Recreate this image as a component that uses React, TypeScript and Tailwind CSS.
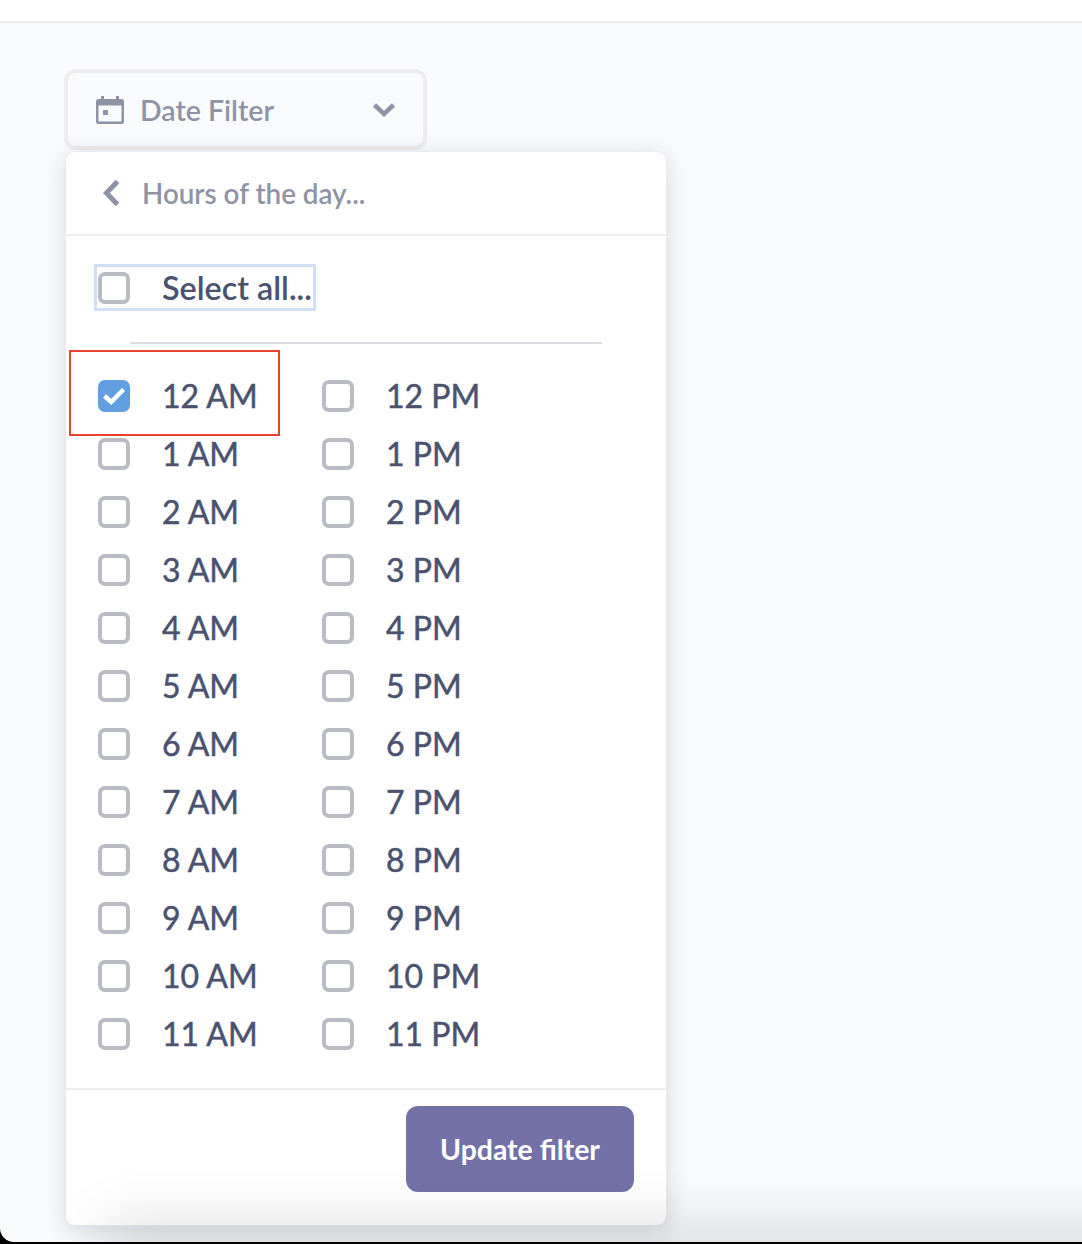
import React from "react";

const hours = ["12", "1", "2", "3", "4", "5", "6", "7", "8", "9", "10", "11"];

function Box({ checked = false }: { checked?: boolean }) {
  if (checked) {
    return (
      <span className="w-[32px] h-[32px] shrink-0 rounded-[7px] bg-[#629fe0] flex items-center justify-center">
        <svg width="24" height="20" viewBox="0 0 24 20" fill="none">
          <path d="M2.500 10 L9.200 16 L21.500 3.500" stroke="#ffffff" strokeWidth="4.500" />
        </svg>
      </span>
    );
  }
  return <span className="w-[32px] h-[32px] shrink-0 rounded-[7px] border-4 border-[#babbc4] bg-white" />;
}

function Option({ label, checked = false }: { label: string; checked?: boolean }) {
  return (
    <label className="h-[58px] w-[224px] flex items-center">
      <Box checked={checked} />
      <span className="ml-[32px] text-[32px] leading-none text-[#4a5270] [-webkit-text-stroke:0.5px_#4a5270]">{label}</span>
    </label>
  );
}

export default function App() {
  return (
    <div className="w-[1082px] h-[1244px] bg-black overflow-hidden" style={{ fontFamily: '"Lato", sans-serif' }}>
      <div className="relative h-[1242px] rounded-bl-[14px] overflow-hidden bg-[#f9fbfd] flex flex-col">
        <div className="h-[23px] shrink-0 bg-white border-b-2 border-[#eeecec]" />
        <div className="flex-1 pl-[65px] pt-[46px] flex flex-col items-start">
          <button className="-ml-[1px] w-[363px] h-[81px] shrink-0 rounded-[12px] border-4 border-[#eeecec] bg-[#f9fbfd] flex items-center pl-[27px] pr-[27px]">
            <svg width="30" height="30" viewBox="0 0 30 30" fill="none" className="shrink-0">
              <path d="M6 1h3v3h12V1h3v3h2.500A2.500 2.500 0 0 1 29 6.500V26.500A2.500 2.500 0 0 1 26.500 29h-23A2.500 2.500 0 0 1 1 26.500V6.500A2.500 2.500 0 0 1 3.500 4H6z" fill="#8e93a6" />
              <rect x="3.500" y="10.500" width="23" height="16" rx="0.500" fill="#f9fbfd" />
              <rect x="8" y="15" width="5" height="5" fill="#8e93a6" />
            </svg>
            <span className="ml-[15px] pt-[2px] text-[28.5px] font-semibold leading-none text-[#8e93a6]">Date Filter</span>
            <svg width="24" height="16" viewBox="0 0 24 16" fill="none" className="ml-auto shrink-0">
              <path d="M2.500 3 L12 12 L21.500 3" stroke="#8e93a6" strokeWidth="4.500" />
            </svg>
          </button>
          <div className="mt-[1px] w-[602px] h-[1075px] shrink-0 rounded-[10px] bg-white border border-[#e9ebee] shadow-[0_4px_22px_rgba(30,40,60,0.16)] flex flex-col">
            <div className="h-[84px] shrink-0 border-b-2 border-[#eeeeef] flex items-center pl-[35px] pb-[1px]">
              <svg width="20" height="28" viewBox="0 0 20 28" fill="none" className="shrink-0">
                <path d="M16.500 2.500 L5.500 14 L16.500 25.500" stroke="#8e93a6" strokeWidth="5" />
              </svg>
              <span className="ml-[21px] pt-[2px] text-[27.8px] font-semibold leading-none text-[#8e93a6]">Hours of the day...</span>
            </div>
            <div className="pl-[28px] pt-[28px]">
              <div className="w-[222px] h-[47px] border-[3.5px] border-[#cfe0f5] flex items-center pl-[1px]">
                <Box />
                <span className="ml-[32px] text-[32.3px] font-semibold leading-none text-[#4a5270] whitespace-nowrap pt-[2px]">Select all...</span>
              </div>
            </div>
            <div className="ml-[64px] mt-[31px] w-[472px] h-[2px] bg-[#dcdde2]" />
            <div className="pl-[32px] pt-[23px] grid grid-cols-[224px_224px]">
              {hours.map((h, i) => (
                <React.Fragment key={h}>
                  <Option label={`${h} AM`} checked={i === 0} />
                  <Option label={`${h} PM`} />
                </React.Fragment>
              ))}
            </div>
            <div className="mt-[25px] h-[2px] bg-[#eeeeef]" />
            <div className="flex justify-end pr-[32px] pt-[16px]">
              <button className="w-[228px] h-[86px] rounded-[12px] bg-[#7371a8] text-white text-[28.4px] font-bold leading-none">Update filter</button>
            </div>
          </div>
        </div>
        <div className="absolute left-[69px] top-[350px] w-[211px] h-[86px] border-2 border-[#e8412c] pointer-events-none" />
        <div className="absolute left-[120px] right-[-100px] top-full h-[20px] shadow-[0_0_60px_16px_rgba(0,0,0,0.15)] pointer-events-none" />
      </div>
    </div>
  );
}
